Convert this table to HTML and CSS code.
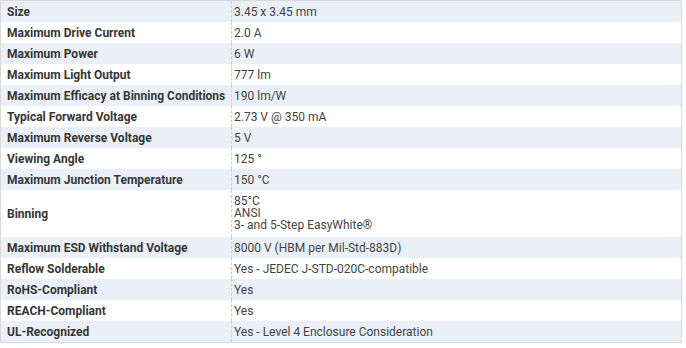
FILE: index.html
```html
<!DOCTYPE html>
<html lang="en">
<head>
<meta charset="utf-8">
<title>Specifications</title>
<link rel="stylesheet" href="styles.css">
</head>
<body>
<table class="specs">
  <colgroup><col class="col-label"><col class="col-value"></colgroup>
  <tbody>
    <tr><th>Size</th><td>3.45 x 3.45 mm</td></tr>
    <tr><th>Maximum Drive Current</th><td>2.0 A</td></tr>
    <tr><th>Maximum Power</th><td>6 W</td></tr>
    <tr><th>Maximum Light Output</th><td>777 lm</td></tr>
    <tr><th>Maximum Efficacy at Binning Conditions</th><td>190 lm/W</td></tr>
    <tr><th>Typical Forward Voltage</th><td>2.73 V @ 350 mA</td></tr>
    <tr><th>Maximum Reverse Voltage</th><td>5 V</td></tr>
    <tr><th>Viewing Angle</th><td>125 °</td></tr>
    <tr><th>Maximum Junction Temperature</th><td>150 °C</td></tr>
    <tr class="multi"><th>Binning</th><td>85°C<br>ANSI<br>3- and 5-Step EasyWhite®</td></tr>
    <tr><th>Maximum ESD Withstand Voltage</th><td>8000 V (HBM per Mil-Std-883D)</td></tr>
    <tr><th>Reflow Solderable</th><td>Yes - JEDEC J-STD-020C-compatible</td></tr>
    <tr><th>RoHS-Compliant</th><td>Yes</td></tr>
    <tr><th>REACH-Compliant</th><td>Yes</td></tr>
    <tr><th>UL-Recognized</th><td>Yes - Level 4 Enclosure Consideration</td></tr>
  </tbody>
</table>
</body>
</html>
```
FILE: styles.css
```css
html, body {
  margin: 0;
  padding: 0;
  background: #ffffff;
}
.specs {
  width: 682px;
  border-collapse: collapse;
  table-layout: fixed;
  border: 1px solid #d9d9d9;
  font-family: Roboto, "Liberation Sans", sans-serif;
  font-size: 12px;
  line-height: 12px;
  color: #444;
}
.col-label { width: 231px; }
.specs th,
.specs td {
  padding: 5px 6px 4px;
  vertical-align: middle;
  text-align: left;
}
.specs th {
  font-weight: bold;
  color: #363636;
  border-right: 1px dashed #cfcfcf;
  white-space: nowrap;
}
.specs td {
  padding-left: 2px;
}
.specs tr:nth-child(odd) {
  background: #ebf0f8;
}
.specs tr.multi td {
  padding-bottom: 6px;
}
```
